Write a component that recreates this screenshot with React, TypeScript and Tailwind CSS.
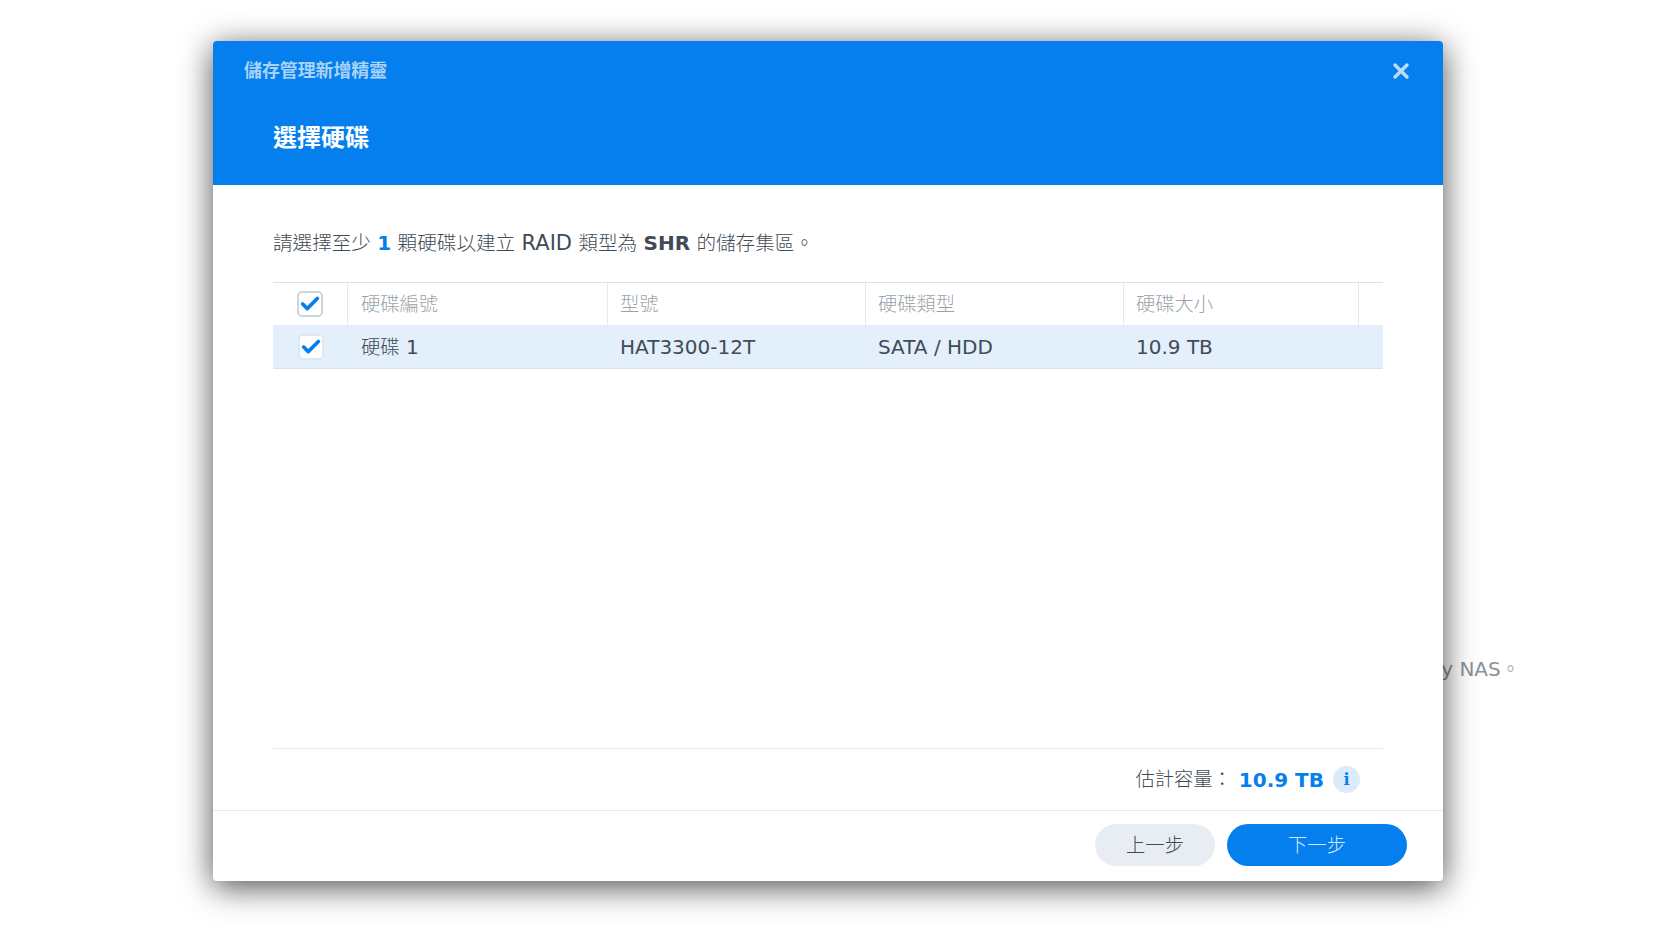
import type { ReactNode } from 'react'
import { Check, X } from 'lucide-react'

const FONT = "font-['DejaVu_Sans','Noto_Sans_CJK_TC',sans-serif]"
const GRID = 'grid grid-cols-[75px_260px_258px_258px_235px_1fr]'

// CJK glyphs in the shot run a bit smaller and lighter than the latin ones
function Zh({ children, size = 'text-[19.3px]' }: { children: ReactNode; size?: string }) {
  return <span className={`${size} font-light`}>{children}</span>
}

function Checkbox({ border }: { border: string }) {
  return (
    <div className={`flex h-[26px] w-[26px] items-center justify-center rounded-[5px] border-2 bg-white ${border}`}>
      <Check size={24} strokeWidth={4} className="text-[#057fee]" />
    </div>
  )
}

export default function App() {
  const big = 'text-[19.6px]'
  return (
    <div className={`relative h-[932px] w-full overflow-hidden bg-white ${FONT}`}>
      {/* page text behind the dialog */}
      <p className="flex h-full items-center justify-end pr-[136px] pt-[407px] text-[20px] text-[#8a929a]">
        <span>Synology NAS<Zh>。</Zh></span>
      </p>

      {/* Dialog */}
      <div className="absolute left-[213px] top-[41px] flex h-[840px] w-[1230px] flex-col overflow-hidden rounded-[4px] bg-white shadow-[0_6px_32px_rgba(0,0,0,0.7)]">
        <div className="h-[144px] shrink-0 bg-[#057fee]">
          <div className="flex items-center justify-between pl-[31px] pr-[30px] pt-[16px]">
            <span className="text-[17.9px] font-bold leading-[28px] text-[#a9d2f9]">儲存管理新增精靈</span>
            <X size={24} strokeWidth={3.5} className="text-[#bcdcfb]" />
          </div>
          <h1 className="pl-[60px] pt-[35px] text-[24px] font-bold leading-[36px] text-white">選擇硬碟</h1>
        </div>

        <div className="flex flex-1 flex-col px-[60px]">
          <p className="pt-[43px] text-[20px] leading-[30px] text-[#414b55]">
            <Zh size={big}>請選擇至少</Zh> <b className="text-[#057fee]">1</b> <Zh size={big}>顆硬碟以建立</Zh> <span className="text-[21px]">RAID</span> <Zh size={big}>類型為</Zh> <b>SHR</b> <Zh size={big}>的儲存集區。</Zh>
          </p>

          {/* Disk table */}
          <div className="mt-[23px] flex-1 text-[20px]">
            <div className={`${GRID} h-[43px] border-t border-[#d7e3ee] text-[#9aa3ab]`}>
              <div className="flex items-center justify-center border-r border-[#e3ebf2] pr-[1px]">
                <Checkbox border="border-[#c9d5e0]" />
              </div>
              <div className="flex items-center border-r border-[#e3ebf2] pl-[13px] pt-[2px]"><Zh>硬碟編號</Zh></div>
              <div className="flex items-center border-r border-[#e3ebf2] pl-[12px] pt-[2px]"><Zh>型號</Zh></div>
              <div className="flex items-center border-r border-[#e3ebf2] pl-[12px] pt-[2px]"><Zh>硬碟類型</Zh></div>
              <div className="flex items-center border-r border-[#e3ebf2] pl-[12px] pt-[2px]"><Zh>硬碟大小</Zh></div>
              <div />
            </div>
            <div className={`${GRID} h-[44px] border-b border-[#d7e3ee] bg-[#e3effb] text-[#414b55]`}>
              <div className="flex items-center justify-center pt-[1px]">
                <Checkbox border="border-[#dde8f3]" />
              </div>
              <div className="flex items-center pl-[13px] pt-[1px]"><span><Zh>硬碟</Zh> 1</span></div>
              <div className="flex items-center pl-[12px]">HAT3300-12T</div>
              <div className="flex items-center pl-[12px]">SATA / HDD</div>
              <div className="flex items-center pl-[12px]">10.9 TB</div>
              <div />
            </div>
          </div>

          <div className="flex h-[62px] items-center justify-end border-t border-[#e3ebf2] pr-[23px] text-[20px]">
            <span className="text-[#414b55]"><Zh>估計容量：</Zh></span>
            <b className="ml-[7px] mr-[9px] text-[#057fee]">10.9 TB</b>
            <span className="flex h-[27px] w-[27px] items-center justify-center rounded-full bg-[#dcebfb] font-['DejaVu_Serif',serif] text-[16px] font-bold text-[#057fee]">
              i
            </span>
          </div>
        </div>

        <div className="flex h-[71px] shrink-0 items-start justify-end gap-[12px] border-t border-[#e3ebf2] pr-[36px] pt-[13px] text-[20px]">
          <button className="h-[42px] w-[120px] rounded-full bg-[#e8edf4] text-[#414b55]"><Zh>上一步</Zh></button>
          <button className="h-[42px] w-[180px] rounded-full bg-[#057fee] text-[#d5e9fc]"><Zh>下一步</Zh></button>
        </div>
      </div>
    </div>
  )
}
